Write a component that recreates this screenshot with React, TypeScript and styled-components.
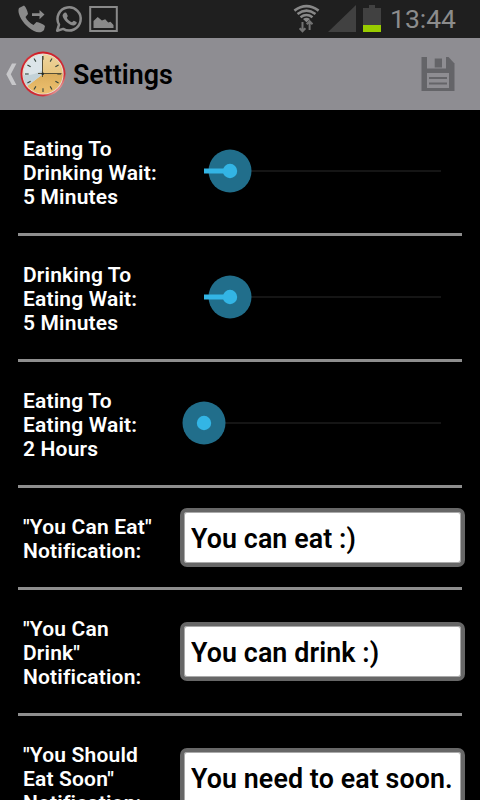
import React from "react";
import styled, { createGlobalStyle } from "styled-components";

const GlobalStyle = createGlobalStyle`
  * { box-sizing: border-box; }
  html, body { margin: 0; background: #000; }
  body { overflow: hidden; }
`;

const Screen = styled.div`
  width: 480px;
  height: 800px;
  overflow: hidden;
  background: #000;
  color: #fff;
  font-family: Roboto, "Liberation Sans", sans-serif;
  display: flex;
  flex-direction: column;
`;

const StatusBar = styled.header`
  flex: none;
  height: 38px;
  background: #1f1f1f;
  display: flex;
  justify-content: space-between;
`;

const StatusGroup = styled.div`
  display: flex;
`;

const Clock = styled.span`
  width: 98px;
  padding-left: 8px;
  font-size: 26.5px;
  line-height: 38px;
  font-weight: 400;
  letter-spacing: 0;
  color: #8c8c8c;
  white-space: nowrap;
`;

const ActionBar = styled.nav`
  flex: none;
  height: 72px;
  background: #8e8d92;
  display: flex;
  align-items: center;
`;

const Title = styled.h1`
  flex: 1;
  margin: 0;
  padding: 2px 0 0 7px;
  font-size: 26.8px;
  line-height: 32px;
  font-weight: 600;
  color: #000;
`;

const SaveButton = styled.button`
  width: 84px;
  height: 72px;
  padding: 0;
  border: 0;
  background: none;
  display: block;
`;

const List = styled.main`
  flex: none;
  padding: 0 15px 0 18px;
`;

const Row = styled.section`
  display: flex;
  align-items: center;
  width: 447px;
  padding: 27px 0 24px 5px;
`;

const Divider = styled.hr`
  width: 444px;
  height: 3px;
  margin: 0;
  border: 0;
  background: #8e8e8e;
`;

const Label = styled.div`
  flex: none;
  width: 157px;
  font-size: 21px;
  line-height: 24px;
  font-weight: 600;
  letter-spacing: 0.17px;
  white-space: pre-line;
`;

const Slider = styled.svg`
  display: block;
  flex: none;
  width: 285px;
  height: 48px;
  margin-top: -4px;
`;

const TextField = styled.input`
  flex: none;
  width: 285px;
  height: 59px;
  margin: -9px 0 -6px;
  padding: 3px 0 0 7px;
  border: 4px solid #676767;
  border-radius: 7px;
  outline: 0;
  background: #fff;
  box-shadow: inset 0 0 0 1px #aaa;
  color: #000;
  font: 600 26.8px/32px Roboto, "Liberation Sans", sans-serif;
  letter-spacing: 0.1px;
`;

const NotificationIcons = () => (
  <svg width="130" height="38" viewBox="0 0 130 38" fill="none">
    <path
      d="M19 8 L24 5.5 C26 7 27.5 11 28 14 L25.5 17 C27 20.5 30 23 33.5 25 L36.5 22 C39.5 22.5 43 24 45 26 L44 30 C42 32.5 38 33.2 34 31 C27 27.5 21 20.5 19 14 C18.3 11.5 18.3 9.7 19 8Z"
      fill="#8a8a8a"
    />
    <path d="M32 13.2h7.5V10l5 4.6-5 4.6v-3.3H32z" fill="#8a8a8a" />
    <path
      d="M57.2 30.7 L59 24.6 A11.6 11.6 0 1 1 63.2 28.9 Z"
      stroke="#8a8a8a"
      strokeWidth="2.5"
      strokeLinejoin="round"
    />
    <path
      d="M64.2 13 C65.2 12.3 66.3 12.5 66.7 13.4 L67.7 15.7 C68 16.5 66.7 17.5 66.9 18 C68 20 69.7 21.4 71.8 22.2 C72.4 22.4 73.2 20.8 73.9 20.8 L76.5 22.1 C77.3 22.7 76.2 25 74 25.5 C69.5 26 63 19.5 62.6 15.8 C62.5 14.8 63.3 13.6 64.2 13Z"
      fill="#8a8a8a"
    />
    <rect x="90.2" y="7" width="26.6" height="24" stroke="#8a8a8a" strokeWidth="2" />
    <path d="M93.5 28v-7l4.2-4 4.2 3.5 3.3-1.2 3 3.2 2.3-.8 3 3.3v3z" fill="#8a8a8a" />
  </svg>
);

const SystemIcons = () => (
  <svg width="96" height="38" viewBox="286 0 96 38" fill="none">
    <g stroke="#888" strokeWidth="2.6">
      <path d="M294.4 10.6 Q306.5 1.8 318.6 10.6" />
      <path d="M297.5 14 Q306.5 7.3 315.5 14" />
      <path d="M300.5 17.2 Q306.5 12.8 312.5 17.2" />
    </g>
    <path d="M303 19 Q306.5 16.7 310 19 L306.5 22.3Z" fill="#888" />
    <path d="M302.5 22v9M299.6 28.2l2.9 3 2.9-3M309.6 30V21.5M306.7 24.2l2.9-3 2.9 3" stroke="#727272" strokeWidth="2" />
    <path d="M328 32 L356 5 V32Z" fill="#414141" />
    <path d="M369 5h6v3h6v17h-18V8h6z" fill="#414141" />
    <path d="M363 25h18v7h-18z" fill="#99cc00" />
  </svg>
);

const ticks = Array.from({ length: 12 }, (_, i) => i * 30);

const AppIcon = () => (
  <svg width="66" height="72" viewBox="0 38 66 72" fill="none">
    <defs>
      <linearGradient id="rim" x1="0" y1="0" x2="1" y2="1">
        <stop offset="0" stopColor="#e9777a" />
        <stop offset=".2" stopColor="#cf1d26" />
        <stop offset=".75" stopColor="#cf3038" />
        <stop offset=".88" stopColor="#edb6b2" />
        <stop offset="1" stopColor="#b8242b" />
      </linearGradient>
      <linearGradient id="face" x1="0" y1="0" x2="0" y2="1">
        <stop offset="0" stopColor="#eed49d" />
        <stop offset=".47" stopColor="#e8c681" />
        <stop offset=".5" stopColor="#dcae5c" />
        <stop offset="1" stopColor="#edc070" />
      </linearGradient>
    </defs>
    <path d="M12 63.5h4.4L10.8 74.2 16.4 85H12L6.3 74.2z" fill="#c7c7ca" />
    <circle cx="43" cy="74" r="22.5" fill="url(#rim)" />
    <circle cx="43" cy="74" r="20.6" fill="#e7e1da" />
    <circle cx="43" cy="74" r="19.8" fill="url(#face)" />
    <path d="M43 74V54.2A19.8 19.8 0 0 0 27.3 86Z" fill="#dce5e9" />
    <path d="M43 74L27.3 86A19.8 19.8 0 0 1 23.2 75Q34 76 43 70Z" fill="#c3d2d8" />
    {ticks.map((a) => (
      <path key={a} d="M43 56v3.7" stroke="#34443b" strokeWidth="1.1" transform={`rotate(${a} 43 74)`} />
    ))}
    <path d="M42.5 56V77M38 73.5h23.5" stroke="#554e36" strokeWidth="1" />
    <circle cx="42.7" cy="73.7" r="1.3" fill="#222b28" />
  </svg>
);

const SaveIcon = () => (
  <svg width="84" height="72" viewBox="396 38 84 72" fill="none">
    <path d="M421.5 57h27l6 6.5V91h-33z" fill="#646468" />
    <path d="M427 57h19v11.5h-19z" fill="#8e8d92" />
    <path d="M434.7 58.5h7.3v9h-7.3z" fill="#646468" />
    <path d="M427 73h22v15h-22z" fill="#8e8d92" />
    <path d="M429 78h18M429 83.5h18" stroke="#646468" strokeWidth="2" />
  </svg>
);

const SeekBar = ({ thumb }: { thumb: number }) => (
  <Slider viewBox="180 -24 285 48">
    <path d="M204 0H441" stroke="#151515" strokeWidth="2" />
    <circle cx={thumb} cy="0" r="21.5" fill="#216e8b" />
    <path d={`M204 0H${thumb}`} stroke="#33b5e5" strokeWidth={thumb > 204 ? 5 : 0} />
    <circle cx={thumb} cy="0" r="7.2" fill="#33b5e5" />
  </Slider>
);

const sliders = [
  { label: "Eating To\nDrinking Wait:\n5 Minutes", thumb: 230 },
  { label: "Drinking To\nEating Wait:\n5 Minutes", thumb: 230 },
  { label: "Eating To\nEating Wait:\n2 Hours", thumb: 204 },
];

const messages = [
  { label: '"You Can Eat"\nNotification:', value: "You can eat :)" },
  { label: '"You Can\nDrink"\nNotification:', value: "You can drink :)" },
  { label: '"You Should\nEat Soon"\nNotification:', value: "You need to eat soon." },
];

export default function App() {
  return (
    <Screen>
      <GlobalStyle />
      <StatusBar>
        <NotificationIcons />
        <StatusGroup>
          <SystemIcons />
          <Clock>13:44</Clock>
        </StatusGroup>
      </StatusBar>
      <ActionBar>
        <AppIcon />
        <Title>Settings</Title>
        <SaveButton aria-label="Save">
          <SaveIcon />
        </SaveButton>
      </ActionBar>
      <List>
        {sliders.map((s) => (
          <React.Fragment key={s.label}>
            <Row>
              <Label>{s.label}</Label>
              <SeekBar thumb={s.thumb} />
            </Row>
            <Divider />
          </React.Fragment>
        ))}
        {messages.map((m) => (
          <React.Fragment key={m.label}>
            <Row>
              <Label>{m.label}</Label>
              <TextField defaultValue={m.value} />
            </Row>
            <Divider />
          </React.Fragment>
        ))}
      </List>
    </Screen>
  );
}
